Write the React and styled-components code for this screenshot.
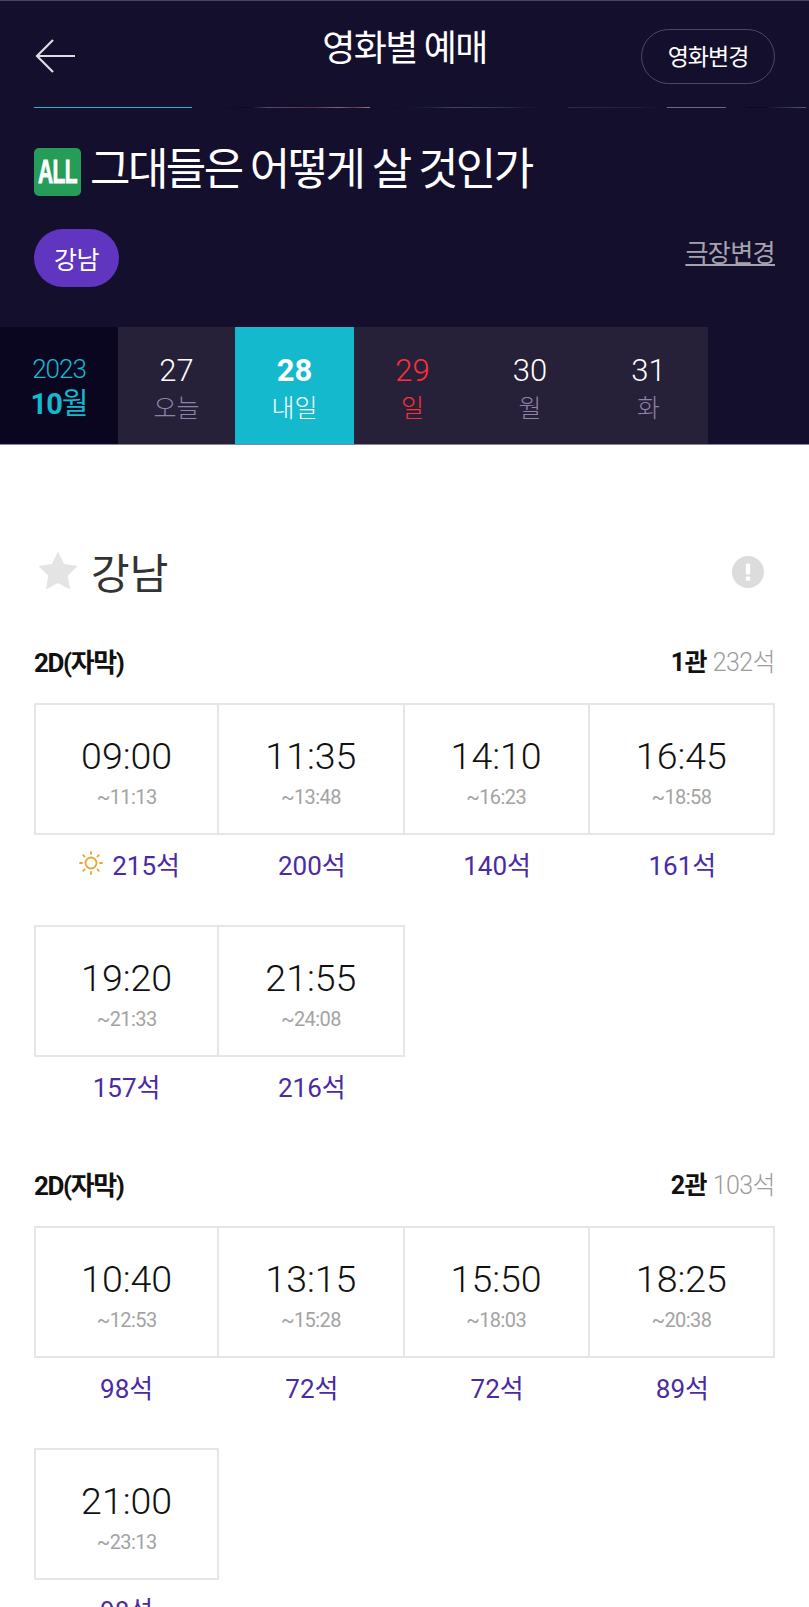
import React from "react";
import styled, { createGlobalStyle } from "styled-components";

const GlobalStyle = createGlobalStyle`
  html, body {
    margin: 0;
    padding: 0;
    height: 1607px;
    overflow: hidden;
    background: #fff;
    font-family: Roboto, "Noto Sans CJK KR", sans-serif;
  }
  * { box-sizing: border-box; }
`;

const Page = styled.div`
  width: 809px;
  height: 1607px;
  overflow: hidden;
`;

const Hero = styled.header`
  height: 445px;
  background: #150f2e;
  border-top: 1px solid #4a4658;
  border-bottom: 1px solid #8a8798;
  display: flex;
  flex-direction: column;
`;

const TopBar = styled.div`
  height: 106px;
  padding: 28px 34px 0;
  display: grid;
  grid-template-columns: 134px 1fr 134px;
  align-items: start;
`;

const BackButton = styled.button`
  width: 42px;
  height: 36px;
  margin-top: 9px;
  padding: 0;
  background: none;
  border: 0;
  color: #dcdce2;
`;

const PageTitle = styled.h1`
  margin: 0;
  text-align: center;
  font-size: 36px;
  line-height: 40px;
  font-weight: 400;
  letter-spacing: -1.7px;
  color: #fff;
`;

const ChangeButton = styled.button`
  height: 55px;
  width: 134px;
  padding: 0 0 4px;
  background: none;
  border: 1px solid #4d4666;
  border-radius: 28px;
  color: #fff;
  font: inherit;
  font-size: 23px;
  letter-spacing: -1px;
`;

const Strip = styled.div`
  height: 2px;
  margin-left: 34px;
  display: flex;
  gap: 20px;
`;

const StripPiece = styled.span`
  width: ${(p) => p.$w}px;
  height: 1px;
  background: ${(p) => p.$bg};
`;

const MovieRow = styled.div`
  margin: 38px 34px 0;
  display: flex;
  align-items: center;
  gap: 9px;
  height: 50px;
`;

const RatingBadge = styled.span`
  width: 47px;
  height: 48px;
  border-radius: 5px;
  background: #259d58;
  color: #fff;
  font-family: "Liberation Sans", sans-serif;
  font-weight: 700;
  font-size: 22px;
  letter-spacing: -0.6px;
  -webkit-text-stroke: 0.6px #fff;
  display: flex;
  align-items: center;
  justify-content: center;
  span { transform: scale(0.95, 1.55); }
`;

const MovieTitle = styled.h2`
  margin: 0;
  padding-bottom: 12px;
  font-size: 44px;
  font-weight: 400;
  color: #fff;
  letter-spacing: -2.6px;
  white-space: nowrap;
`;

const TheaterRow = styled.div`
  margin: 32px 34px 0;
  display: flex;
  justify-content: space-between;
  align-items: flex-start;
`;

const TheaterPill = styled.span`
  width: 85px;
  height: 58px;
  border-radius: 29px;
  background: #6035c0;
  color: #fff;
  font-size: 25px;
  letter-spacing: -0.6px;
  display: flex;
  align-items: center;
  justify-content: center;
`;

const TheaterLink = styled.a`
  margin-top: 9px;
  color: #a5a3ad;
  font-size: 25px;
  line-height: 32px;
  letter-spacing: -0.6px;
  text-decoration: underline;
`;

const DateBar = styled.div`
  margin-top: auto;
  height: 117px;
  display: flex;
`;

const MonthCell = styled.div`
  width: 118px;
  background: #0b0620;
  color: #14b9cd;
  display: flex;
  flex-direction: column;
  align-items: center;
  justify-content: center;
  padding-top: 3px;
`;

const Year = styled.span`
  font-size: 26px;
  font-weight: 300;
  line-height: 34px;
  letter-spacing: -1px;
`;

const Month = styled.span`
  font-size: 29px;
  line-height: 36px;
  font-weight: 400;
  letter-spacing: -1px;
  b { font-weight: 700; }
`;

const Days = styled.div`
  width: 590px;
  background: #262039;
  display: flex;
`;

const Day = styled.div`
  flex: 0 0 ${(p) => p.$w}px;
  background: ${(p) => (p.$active ? "#14b9cd" : "transparent")};
  display: flex;
  flex-direction: column;
  align-items: center;
  justify-content: center;
  padding-top: 6px;
`;

const DayNum = styled.span`
  font-size: 31px;
  line-height: 40px;
  font-weight: ${(p) => (p.$active ? 700 : 300)};
  color: ${(p) => (p.$red ? "#ff2f3a" : "#fff")};
`;

const DayName = styled.span`
  font-size: 25px;
  line-height: 36px;
  font-weight: 300;
  color: ${(p) => (p.$red ? "#ff2f3a" : p.$active ? "#fff" : "#8d82ab")};
`;

const Content = styled.main`
  padding: 95px 34px 0;
`;

const TheaterHead = styled.div`
  display: flex;
  align-items: center;
  justify-content: space-between;
  height: 60px;
`;

const TheaterName = styled.div`
  display: flex;
  align-items: center;
  gap: 12px;
  padding-left: 3px;
  color: #333;
  font-size: 42px;
  font-weight: 400;
`;

const AlertWrap = styled.span`
  display: flex;
  margin: 4px 11px 0 0;
`;

const Section = styled.section`
  margin-top: ${(p) => p.$top}px;
`;

const SectionHead = styled.div`
  height: 32px;
  display: flex;
  align-items: center;
  justify-content: space-between;
  margin-bottom: 27px;
`;

const Format = styled.span`
  font-size: 26px;
  font-weight: 700;
  letter-spacing: -1.4px;
  color: #111;
`;

const Hall = styled.span`
  font-size: 25px;
  letter-spacing: -0.6px;
  color: #9c9c9c;
  font-weight: 300;
  b { font-weight: 700; color: #111; margin-right: 6px; letter-spacing: -0.6px; }
`;

const Shows = styled.div`
  display: grid;
  grid-template-columns: repeat(4, 185.25px);
  row-gap: 34px;
`;

const Show = styled.div`
  display: flex;
  flex-direction: column;
  align-items: center;
`;

const TimeBox = styled.div`
  width: 100%;
  height: 132px;
  border: 2px solid #e6e6e6;
  border-left-width: ${(p) => (p.$first ? 2 : 0)}px;
  display: flex;
  flex-direction: column;
  align-items: center;
  padding-top: 28px;
`;

const Start = styled.span`
  font-size: 37.5px;
  line-height: 46px;
  font-weight: 300;
  color: #111;
`;

const End = styled.span`
  margin-top: 3px;
  font-size: 20px;
  line-height: 30px;
  letter-spacing: -0.6px;
  color: #a3a3a3;
`;

const Seats = styled.div`
  height: 56px;
  display: flex;
  align-items: center;
  gap: 8px;
  font-size: 26px;
  color: #4a2aa5;
`;

const SunWrap = styled.span`
  display: flex;
  margin-left: 5px;
`;

const ArrowIcon = () => (
  <svg width="42" height="36" viewBox="0 0 42 36" fill="none" stroke="currentColor" strokeWidth="2.2">
    <path d="M41 18H3M19 2 3 18l16 16" />
  </svg>
);

const StarIcon = () => (
  <svg width="42" height="40" viewBox="0 0 42 40" fill="#e4e4e4">
    <path d="M21 1.500l6 12.600 13.600 1.900-9.900 9.700 2.400 13.800L21 33l-12.100 6.500 2.400-13.800L1.400 16 15 14.100z" />
  </svg>
);

const AlertIcon = () => (
  <svg width="32" height="32" viewBox="0 0 32 32">
    <circle cx="16" cy="16" r="16" fill="#dcdcdc" />
    <rect x="13.800" y="7.500" width="4.400" height="11" rx="1" fill="#fff" />
    <rect x="13.800" y="20.500" width="4.400" height="4.200" rx="1" fill="#fff" />
  </svg>
);

const SunIcon = () => (
  <svg width="26" height="26" viewBox="0 0 26 26" fill="none" stroke="#e8a630" strokeWidth="1.8" strokeLinecap="round">
    <circle cx="13" cy="13" r="5.500" />
    <path d="M13 2v2M13 22v2M2 13h2M22 13h2M5.200 5.200l1.400 1.400M19.400 19.400l1.400 1.400M5.200 20.800l1.400-1.400M19.400 6.600l1.400-1.400" />
  </svg>
);

const stripPieces = [
  { w: 158, bg: "#14b9cd" },
  { w: 158, bg: "linear-gradient(90deg, #150f2e, #0d0a1c 25%, #5a4a5e 35%, #5a2f45 65%, #7a6a7a 80%, #6e2f45 90%, #8a8590)" },
  { w: 158, bg: "linear-gradient(90deg, #0d0a1c, #14262f 25%, #3d4a55 40%, #2f3f50 65%, #17202f 85%, #0d0a1c)" },
  { w: 158, bg: "linear-gradient(90deg, #2f2a3a, #1c2240 45%, #0d0a1c 62%, #6d6780 63%, #6d6780 100%)" },
  { w: 60, bg: "linear-gradient(90deg, #0d0a1c, #0d0a1c 30%, #4a5f80)" },
];

const days = [
  { num: 27, name: "오늘", w: 117 },
  { num: 28, name: "내일", w: 119, active: true },
  { num: 29, name: "일", w: 117, red: true },
  { num: 30, name: "월", w: 118 },
  { num: 31, name: "화", w: 119 },
];

const halls = [
  {
    name: "1관",
    total: "232석",
    top: 44,
    shows: [
      ["09:00", "~11:13", "215석", true],
      ["11:35", "~13:48", "200석"],
      ["14:10", "~16:23", "140석"],
      ["16:45", "~18:58", "161석"],
      ["19:20", "~21:33", "157석"],
      ["21:55", "~24:08", "216석"],
    ],
  },
  {
    name: "2관",
    total: "103석",
    top: 54,
    shows: [
      ["10:40", "~12:53", "98석"],
      ["13:15", "~15:28", "72석"],
      ["15:50", "~18:03", "72석"],
      ["18:25", "~20:38", "89석"],
      ["21:00", "~23:13", "98석"],
    ],
  },
];

export default function App() {
  return (
    <Page>
      <GlobalStyle />
      <Hero>
        <TopBar>
          <BackButton aria-label="back"><ArrowIcon /></BackButton>
          <PageTitle>영화별 예매</PageTitle>
          <ChangeButton>영화변경</ChangeButton>
        </TopBar>
        <Strip>
          {stripPieces.map((piece, i) => (
            <StripPiece key={i} $w={piece.w} $bg={piece.bg} />
          ))}
        </Strip>
        <MovieRow>
          <RatingBadge><span>ALL</span></RatingBadge>
          <MovieTitle>그대들은 어떻게 살 것인가</MovieTitle>
        </MovieRow>
        <TheaterRow>
          <TheaterPill>강남</TheaterPill>
          <TheaterLink>극장변경</TheaterLink>
        </TheaterRow>
        <DateBar>
          <MonthCell>
            <Year>2023</Year>
            <Month><b>10</b>월</Month>
          </MonthCell>
          <Days>
            {days.map((d) => (
              <Day key={d.num} $w={d.w} $active={d.active}>
                <DayNum $active={d.active} $red={d.red}>{d.num}</DayNum>
                <DayName $active={d.active} $red={d.red}>{d.name}</DayName>
              </Day>
            ))}
          </Days>
        </DateBar>
      </Hero>
      <Content>
        <TheaterHead>
          <TheaterName><StarIcon />강남</TheaterName>
          <AlertWrap><AlertIcon /></AlertWrap>
        </TheaterHead>
        {halls.map((hall) => (
          <Section key={hall.name} $top={hall.top}>
            <SectionHead>
              <Format>2D(자막)</Format>
              <Hall><b>{hall.name}</b>{hall.total}</Hall>
            </SectionHead>
            <Shows>
              {hall.shows.map(([start, end, seats, morning], i) => (
                <Show key={start}>
                  <TimeBox $first={i % 4 === 0}>
                    <Start>{start}</Start>
                    <End>{end}</End>
                  </TimeBox>
                  <Seats>
                    {morning && <SunWrap><SunIcon /></SunWrap>}
                    {seats}
                  </Seats>
                </Show>
              ))}
            </Shows>
          </Section>
        ))}
      </Content>
    </Page>
  );
}
